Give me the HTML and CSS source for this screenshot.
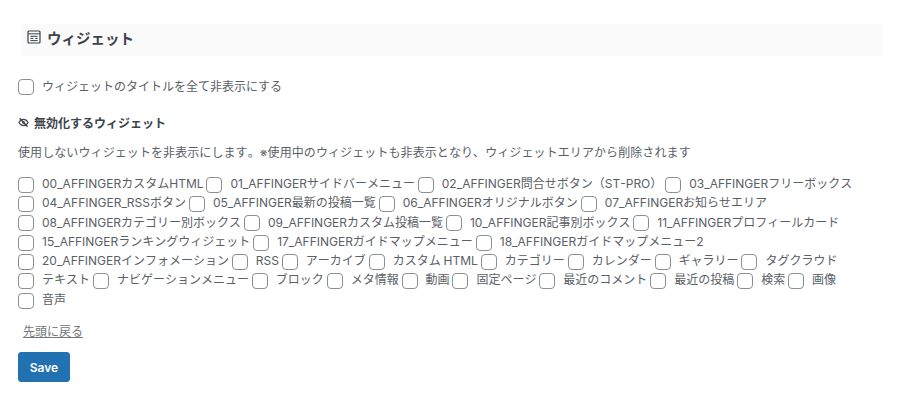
FILE: index.html
```html
<!DOCTYPE html>
<html lang="ja">
<head>
<meta charset="utf-8">
<title>ウィジェット</title>
<link rel="stylesheet" href="styles.css">
</head>
<body>
<main class="page">
  <h2 class="title">
    <svg class="title-icon" viewBox="0 0 14 14" width="14" height="14" aria-hidden="true"><rect x="1" y="1" width="12" height="12" rx="1" fill="none" stroke="currentColor" stroke-width="1.2"/><path d="M1 3.800h12M3.400 6.300h7.200M3.400 8.400h3M8.200 8.400h2.400M3.400 10.600h7.200" fill="none" stroke="currentColor" stroke-width="1"/></svg>
    <span>ウィジェット</span>
  </h2>
  <label class="hide-all"><input type="checkbox" class="cb"><span>ウィジェットのタイトルを全て非表示にする</span></label>
  <h3 class="sub">
    <svg class="sub-icon" viewBox="0 0 12 12" width="11" height="11" aria-hidden="true"><path d="M1 6c1.300-2.300 3-3.400 5-3.400S9.700 3.700 11 6c-1.300 2.300-3 3.400-5 3.400S2.300 8.300 1 6z" fill="none" stroke="currentColor" stroke-width="1.300"/><circle cx="6" cy="6" r="1.500" fill="currentColor"/><path d="M1.800 1.300l8.600 9.400" stroke="currentColor" stroke-width="1.500"/></svg>
    <span>無効化するウィジェット</span>
  </h3>
  <p class="desc">使用しないウィジェットを非表示にします。※使用中のウィジェットも非表示となり、ウィジェットエリアから削除されます</p>
  <div class="list">
    <label class="item"><input type="checkbox" class="cb">00_AFFINGERカスタムHTML</label>
    <label class="item"><input type="checkbox" class="cb">01_AFFINGERサイドバーメニュー</label>
    <label class="item"><input type="checkbox" class="cb">02_AFFINGER問合せボタン（ST-PRO）</label>
    <label class="item"><input type="checkbox" class="cb">03_AFFINGERフリーボックス</label>
    <label class="item"><input type="checkbox" class="cb">04_AFFINGER_RSSボタン</label>
    <label class="item"><input type="checkbox" class="cb">05_AFFINGER最新の投稿一覧</label>
    <label class="item"><input type="checkbox" class="cb">06_AFFINGERオリジナルボタン</label>
    <label class="item"><input type="checkbox" class="cb">07_AFFINGERお知らせエリア</label>
    <label class="item"><input type="checkbox" class="cb">08_AFFINGERカテゴリー別ボックス</label>
    <label class="item"><input type="checkbox" class="cb">09_AFFINGERカスタム投稿一覧</label>
    <label class="item"><input type="checkbox" class="cb">10_AFFINGER記事別ボックス</label>
    <label class="item"><input type="checkbox" class="cb">11_AFFINGERプロフィールカード</label>
    <label class="item"><input type="checkbox" class="cb">15_AFFINGERランキングウィジェット</label>
    <label class="item"><input type="checkbox" class="cb">17_AFFINGERガイドマップメニュー</label>
    <label class="item"><input type="checkbox" class="cb">18_AFFINGERガイドマップメニュー2</label>
    <label class="item"><input type="checkbox" class="cb">20_AFFINGERインフォメーション</label>
    <label class="item"><input type="checkbox" class="cb">RSS</label>
    <label class="item"><input type="checkbox" class="cb">アーカイブ</label>
    <label class="item"><input type="checkbox" class="cb">カスタム HTML</label>
    <label class="item"><input type="checkbox" class="cb">カテゴリー</label>
    <label class="item"><input type="checkbox" class="cb">カレンダー</label>
    <label class="item"><input type="checkbox" class="cb">ギャラリー</label>
    <label class="item"><input type="checkbox" class="cb">タグクラウド</label>
    <label class="item"><input type="checkbox" class="cb">テキスト</label>
    <label class="item"><input type="checkbox" class="cb">ナビゲーションメニュー</label>
    <label class="item"><input type="checkbox" class="cb">ブロック</label>
    <label class="item"><input type="checkbox" class="cb">メタ情報</label>
    <label class="item"><input type="checkbox" class="cb">動画</label>
    <label class="item"><input type="checkbox" class="cb">固定ページ</label>
    <label class="item"><input type="checkbox" class="cb">最近のコメント</label>
    <label class="item"><input type="checkbox" class="cb">最近の投稿</label>
    <label class="item"><input type="checkbox" class="cb">検索</label>
    <label class="item"><input type="checkbox" class="cb">画像</label>
    <label class="item"><input type="checkbox" class="cb">音声</label>
  </div>
  <a class="top-link" href="#">先頭に戻る</a>
  <button class="save" type="button">Save</button>
</main>
</body>
</html>
```

FILE: styles.css
```css
* { box-sizing: border-box; }
html, body { margin: 0; padding: 0; background: #fff; }
body {
  width: 900px;
  height: 400px;
  overflow: hidden;
  font-family: Inter, "Noto Sans CJK JP", sans-serif;
  font-size: 12px;
  font-kerning: none;
  text-spacing-trim: space-all;
  color: #5a6066;
}
.page {
  display: flex;
  flex-direction: column;
  align-items: flex-start;
  padding: 24px 20px 0 18px;
}
.title {
  display: flex;
  align-items: center;
  gap: 6px;
  width: 861px;
  height: 32px;
  margin: 0 0 0 4px;
  padding: 0 0 6px 5px;
  background: #fafafa;
  color: #3c434a;
  font-size: 14.5px;
  font-weight: 700;
}
.title-icon { flex: none; }
.hide-all {
  display: flex;
  align-items: center;
  margin-top: 21px;
  height: 18px;
}
.hide-all .cb { position: relative; top: 1px; }
.hide-all span { position: relative; top: -1px; }
.cb {
  appearance: none;
  width: 16px;
  height: 16px;
  margin: 0 8px 0 0;
  background: #fff;
  border: 1px solid #8c8f94;
  border-radius: 4px;
  flex: none;
  vertical-align: middle;
}
.sub {
  display: flex;
  align-items: center;
  gap: 5px;
  margin: 18px 0 0;
  height: 18px;
  font-size: 12px;
  font-weight: 700;
  color: #3c434a;
}
.sub-icon { flex: none; }
.desc {
  margin: 13px 0 0;
  height: 18px;
  line-height: 18px;
  white-space: nowrap;
  letter-spacing: 0.09px;
}
.list {
  width: 862px;
  margin-top: 12px;
  line-height: 19.3px;
  word-spacing: -0.5px;
}
.item { white-space: nowrap; }
.top-link {
  margin: 14px 0 0 5px;
  line-height: 18px;
  color: #72777c;
}
.save {
  width: 52px;
  height: 30px;
  margin-top: 11px;
  padding: 0;
  background: #2271b1;
  border: 1px solid #2271b1;
  border-radius: 3px;
  color: #fff;
  font: 600 12px Inter, sans-serif;
}
```
